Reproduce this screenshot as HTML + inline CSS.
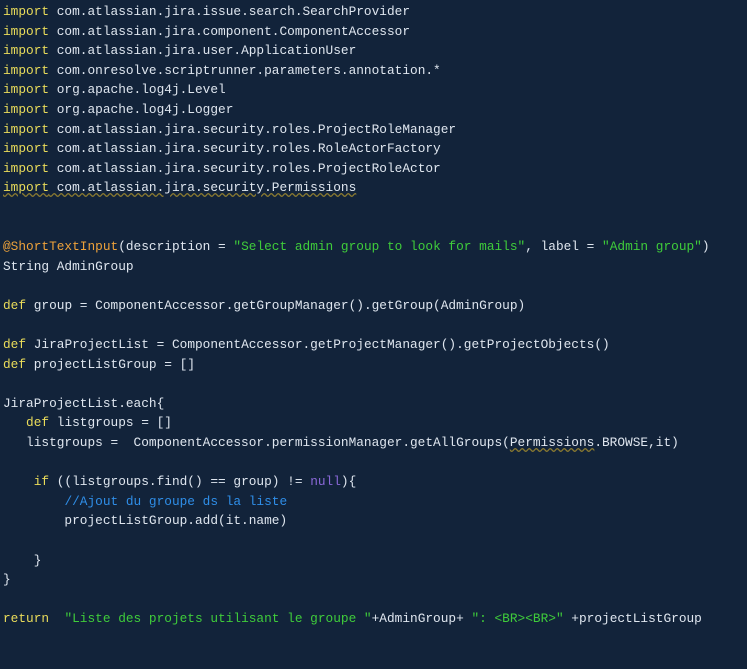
<html><head><style>
body{margin:0;background:#12233a;width:747px;height:669px;overflow:hidden}
pre{margin:0;position:absolute;left:3px;top:2px;font:12.8px/19.6px "Liberation Mono",monospace;color:#dfe6ef;white-space:pre}
.k{color:#eadc5a}.s{color:#3fcc3a}.c{color:#2f8ee8}.n{color:#8a68d8}.a{color:#eea23a}
.u{text-decoration:underline wavy #8a7a30}
</style></head><body><pre><span class="k">import</span> com.atlassian.jira.issue.search.SearchProvider
<span class="k">import</span> com.atlassian.jira.component.ComponentAccessor
<span class="k">import</span> com.atlassian.jira.user.ApplicationUser
<span class="k">import</span> com.onresolve.scriptrunner.parameters.annotation.*
<span class="k">import</span> org.apache.log4j.Level
<span class="k">import</span> org.apache.log4j.Logger
<span class="k">import</span> com.atlassian.jira.security.roles.ProjectRoleManager
<span class="k">import</span> com.atlassian.jira.security.roles.RoleActorFactory
<span class="k">import</span> com.atlassian.jira.security.roles.ProjectRoleActor
<span class="k u">import</span><span class="u"> com.atlassian.jira.security.Permissions</span>


<span class="a">@ShortTextInput</span>(description = <span class="s">"Select admin group to look for mails"</span>, label = <span class="s">"Admin group"</span>)
String AdminGroup

<span class="k">def</span> group = ComponentAccessor.getGroupManager().getGroup(AdminGroup)

<span class="k">def</span> JiraProjectList = ComponentAccessor.getProjectManager().getProjectObjects()
<span class="k">def</span> projectListGroup = []

JiraProjectList.each{
   <span class="k">def</span> listgroups = []
   listgroups =  ComponentAccessor.permissionManager.getAllGroups(<span class="u">Permissions</span>.BROWSE,it)

    <span class="k">if</span> ((listgroups.find() == group) != <span class="n">null</span>){
        <span class="c">//Ajout du groupe ds la liste</span>
        projectListGroup.add(it.name)

    }
}

<span class="k">return</span>  <span class="s">"Liste des projets utilisant le groupe "</span>+AdminGroup+ <span class="s">": &lt;BR&gt;&lt;BR&gt;"</span> +projectListGroup</pre></body></html>
